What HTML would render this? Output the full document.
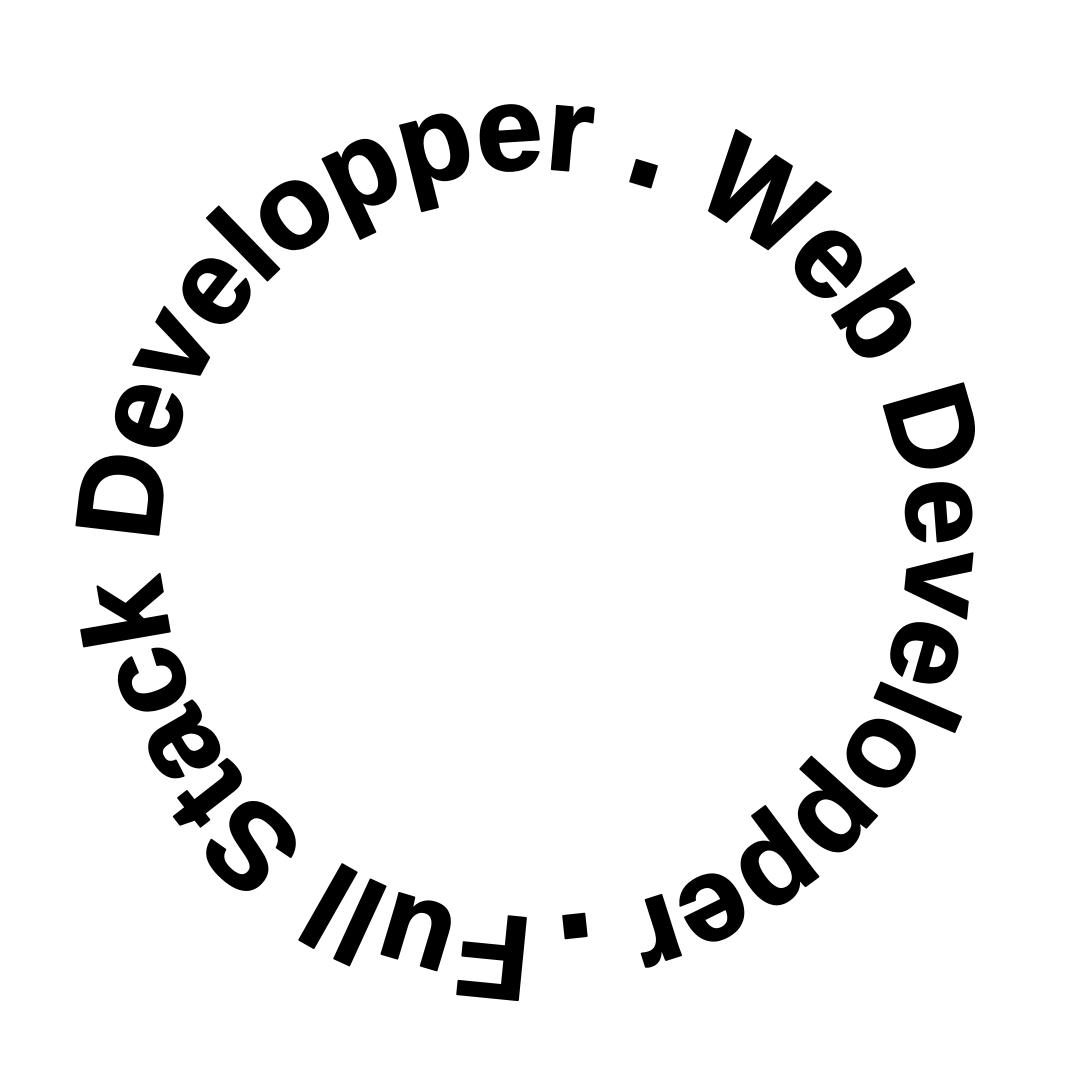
<!DOCTYPE html>
<html><head><style>
html,body{margin:0;padding:0;background:#fff;width:1080px;height:1080px;overflow:hidden}
</style></head><body>
<svg width="1080" height="1080" viewBox="0 0 1080 1080">
<defs>
<path id="c" d="M534,917 A374,374 0 1 1 534,169 A374,374 0 1 1 534,917"/>
</defs>
<text font-family="Liberation Sans, sans-serif" font-size="120" font-weight="bold" fill="#000" stroke="#000" stroke-width="2" stroke-linejoin="round">
<textPath href="#c" textLength="2330" lengthAdjust="spacing">Full Stack Developper <tspan font-size="150">.</tspan> Web Developper <tspan font-size="150">.</tspan></textPath>
</text>
</svg>
</body></html>
